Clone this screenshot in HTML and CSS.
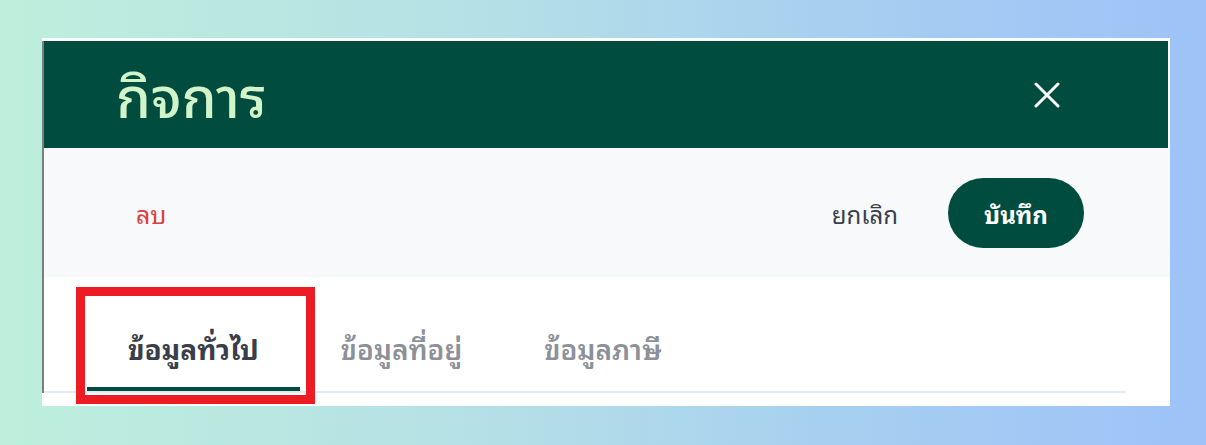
FILE: index.html
```html
<!DOCTYPE html>
<html lang="th">
<head>
<meta charset="utf-8">
<title>กิจการ</title>
<link rel="stylesheet" href="styles.css">
</head>
<body>
<div class="stage">
  <div class="card">
    <div class="frame">
      <header class="header">
        <h1 class="title">กิจการ</h1>
        <button class="close" aria-label="close">
          <svg width="26" height="26" viewBox="0 0 26 26"><path d="M2 2 L24 24 M24 2 L2 24" stroke="#ffffff" stroke-width="3" stroke-linecap="round"/></svg>
        </button>
      </header>
      <div class="toolbar">
        <span class="delete">ลบ</span>
        <div class="actions">
          <span class="cancel">ยกเลิก</span>
          <button class="save">บันทึก</button>
        </div>
      </div>
      <nav class="tabs">
        <div class="tab active">ข้อมูลทั่วไป<span class="highlight"></span></div>
        <div class="tab">ข้อมูลที่อยู่</div>
        <div class="tab">ข้อมูลภาษี</div>
      </nav>
    </div>
  </div>
</div>
</body>
</html>
```

FILE: styles.css
```css
* { box-sizing: border-box; }
html, body { margin: 0; padding: 0; }
body {
  width: 1206px;
  height: 445px;
  background: linear-gradient(90deg, #bdefdc 0%, #b5e0e6 40%, #a6cff0 70%, #9dc3f8 100%);
  font-family: "Noto Sans Thai Looped", "Noto Sans Thai", "Noto Sans", sans-serif;
  overflow: hidden;
}
.stage { padding: 38px 0 0 42px; }
.card {
  width: 1128px;
  background: #ffffff;
  padding-top: 3px;
  padding-bottom: 13px;
}
.frame { border-left: 2px solid #7a807d; }
.header {
  height: 107px;
  margin-right: 2px;
  background: #004d40;
  display: flex;
  align-items: center;
  justify-content: space-between;
  padding: 0 108px 0 72px;
}
.title {
  margin: 0;
  font-size: 56px;
  font-weight: 500;
  color: #d3f4c9;
  line-height: 1;
  padding-bottom: 4px;
}
.close {
  background: none;
  border: 0;
  padding: 0;
  display: flex;
}
.toolbar {
  height: 129px;
  background: #f8f9fb;
  display: flex;
  align-items: center;
  justify-content: space-between;
  padding: 0 86px 0 92px;
}
.delete { color: #d8413a; font-size: 25px; }
.actions { display: flex; align-items: center; gap: 50px; }
.cancel { color: #3a3f4c; font-size: 24px; }
.save {
  width: 136px;
  height: 70px;
  border: 0;
  border-radius: 35px;
  background: #004d40;
  color: #ffffff;
  font-family: inherit;
  font-size: 24px;
  font-weight: 700;
}
.tabs {
  display: flex;
  margin-right: 44px;
  padding-top: 19px;
  border-bottom: 2px solid #e4e9f1;
}
.tab {
  position: relative;
  padding: 17px 41px 4px;
  line-height: 70px;
  font-size: 28px;
  font-weight: 600;
  color: #8c9098;
  border-bottom: 4px solid transparent;
}
.tab.active {
  color: #3a3e49;
  font-weight: 700;
  margin-left: 43px;
  border-bottom-color: #004d40;
}
.highlight {
  position: absolute;
  left: -11px;
  right: -15px;
  top: -9px;
  bottom: -17px;
  border: 9px solid #ed1c24;
}
```
